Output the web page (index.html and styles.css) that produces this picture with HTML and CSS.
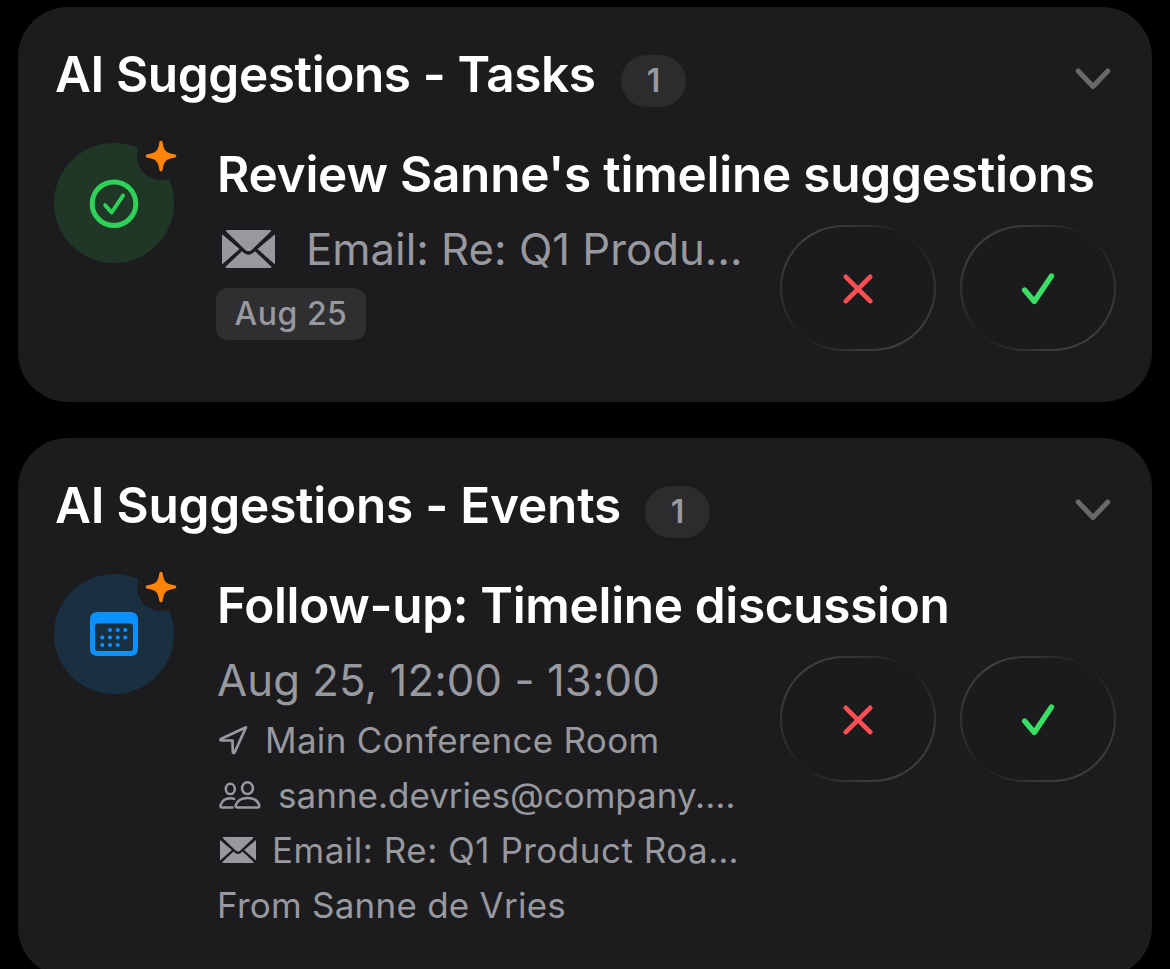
FILE: index.html
```html
<!DOCTYPE html>
<html lang="en">
<head>
<meta charset="utf-8">
<title>AI Suggestions</title>
<link rel="stylesheet" href="styles.css">
</head>
<body>
<svg class="defs" width="0" height="0" aria-hidden="true">
  <symbol id="chevron" viewBox="0 0 36 22"><path d="M3.200 3 18 18.500 32.800 3" fill="none" stroke="currentColor" stroke-width="5" stroke-linecap="round" stroke-linejoin="round"/></symbol>
  <symbol id="sparkle" viewBox="0 0 32 32"><path d="M16 .7c1 0 1.500.7 1.700 1.800C19 11 21 13 29.500 14.300c1.100.2 1.800.8 1.800 1.700s-.7 1.500-1.800 1.700C21 19 19 21 17.700 29.500c-.2 1.100-.7 1.800-1.700 1.800s-1.500-.7-1.700-1.800C13 21 11 19 2.500 17.700 1.400 17.500.7 16.900.7 16s.7-1.500 1.800-1.700C11 13 13 11 14.300 2.500 14.500 1.400 15 .7 16 .7z" fill="currentColor"/></symbol>
  <symbol id="envelope" viewBox="0 0 53 38">
    <path d="M3.500.8Q4.500 0 6 0H47Q48.500 0 49.500.8L30 19.700Q26.500 23 23 19.700ZM0 4.200 17.500 19 0 34.500ZM53 4.200V34.500L35.500 19ZM3 37.200 20 21.200 22 23Q26.500 26.500 31 23L33 21.200 50 37.200Q49 38 47 38H6Q4 38 3 37.200Z" fill="currentColor"/>
  </symbol>
  <symbol id="cross" viewBox="0 0 30 30"><path d="M2.800 2.800 27.200 27.200M27.200 2.800 2.800 27.200" fill="none" stroke="currentColor" stroke-width="4.600" stroke-linecap="round"/></symbol>
  <symbol id="check" viewBox="0 0 34 32"><path d="M3.600 17 13.300 28.500 30.500 3" fill="none" stroke="currentColor" stroke-width="5.400" stroke-linecap="round" stroke-linejoin="round"/></symbol>
</svg>

<main class="list">
  <section class="card card-tasks">
    <header class="card-header">
      <h2 class="heading heading-tasks">AI Suggestions - Tasks</h2>
      <span class="count">1</span>
      <svg class="chevron"><use href="#chevron"/></svg>
    </header>
    <div class="item">
      <div class="avatar avatar-task">
        <svg class="avatar-icon" viewBox="0 0 50 50" fill="none" stroke="currentColor" stroke-linecap="round" stroke-linejoin="round"><circle cx="25" cy="25.700" r="21.800" stroke-width="5"/><path d="M16.200 27.200 22.600 34.500 34 17.700" stroke-width="4"/></svg>
        <span class="badge"><svg><use href="#sparkle"/></svg></span>
      </div>
      <div class="content">
        <h3 class="title title-task">Review Sanne's timeline suggestions</h3>
        <div class="body">
          <div class="details">
            <p class="source"><svg class="envelope-large"><use href="#envelope"/></svg><span>Email: Re: Q1 Produ…</span></p>
            <span class="due">Aug 25</span>
          </div>
          <div class="actions">
            <button class="action reject" aria-label="Reject"><svg class="cross"><use href="#cross"/></svg></button>
            <button class="action accept" aria-label="Accept"><svg class="check"><use href="#check"/></svg></button>
          </div>
        </div>
      </div>
    </div>
  </section>

  <section class="card card-events">
    <header class="card-header">
      <h2 class="heading heading-events">AI Suggestions - Events</h2>
      <span class="count">1</span>
      <svg class="chevron"><use href="#chevron"/></svg>
    </header>
    <div class="item">
      <div class="avatar avatar-event">
        <svg class="avatar-icon" viewBox="0 0 50 50" fill="currentColor"><path fill-rule="evenodd" d="M8.500 3H41.500Q49 3 49 10.500V39.500Q49 47 41.500 47H8.500Q1 47 1 39.500V10.500Q1 3 8.500 3ZM9 14.500Q6 14.500 6 17.500V39Q6 42 9 42H41Q44 42 44 39V17.500Q44 14.500 41 14.500Z"/><g><circle cx="21" cy="21" r="2.100"/><circle cx="28.700" cy="21" r="2.100"/><circle cx="36.300" cy="21" r="2.100"/><circle cx="13.300" cy="28.500" r="2.100"/><circle cx="21" cy="28.500" r="2.100"/><circle cx="28.700" cy="28.500" r="2.100"/><circle cx="36.300" cy="28.500" r="2.100"/><circle cx="13.300" cy="36" r="2.100"/><circle cx="21" cy="36" r="2.100"/><circle cx="28.700" cy="36" r="2.100"/></g></svg>
        <span class="badge"><svg><use href="#sparkle"/></svg></span>
      </div>
      <div class="content">
        <h3 class="title title-event">Follow-up: Timeline discussion</h3>
        <div class="body">
          <div class="details">
            <p class="when">Aug 25, 12:00 - 13:00</p>
            <ul class="meta">
              <li class="place"><svg viewBox="0 0 30 30" width="30" height="30" fill="none" stroke="currentColor" stroke-width="2.700" stroke-linejoin="round"><path d="M2.800 14 28 2.300 16.500 27.700Q15.200 28.600 14.800 27L14.500 15.500 3.400 15.300Q1.500 15 2.800 14Z"/></svg><span>Main Conference Room</span></li>
              <li class="people"><svg viewBox="0 0 42 28" width="42" height="28" fill="none" stroke="currentColor" stroke-width="2.500" stroke-linecap="round" stroke-linejoin="round"><ellipse cx="11.300" cy="7.900" rx="4.500" ry="5.200"/><ellipse cx="28.500" cy="7.200" rx="5.400" ry="5.900"/><path d="M13.500 26.500H3.200Q1 26.500 1.500 24.300C3 19.500 7 17.200 11.300 17.200Q13.500 17.200 15.200 17.900M18.800 26.500H38.200Q40.800 26.500 40.200 24C38.500 19.300 33.500 17 28.500 17S18.500 19.300 16.800 24Q16.200 26.500 18.800 26.500Z"/></svg><span>sanne.devries@company.…</span></li>
              <li class="mail"><svg class="envelope-small"><use href="#envelope"/></svg><span>Email: Re: Q1 Product Roa…</span></li>
              <li class="sender"><span>From Sanne de Vries</span></li>
            </ul>
          </div>
          <div class="actions">
            <button class="action reject" aria-label="Reject"><svg class="cross"><use href="#cross"/></svg></button>
            <button class="action accept" aria-label="Accept"><svg class="check"><use href="#check"/></svg></button>
          </div>
        </div>
      </div>
    </div>
  </section>
</main>
</body>
</html>
```
FILE: styles.css
```css
* { box-sizing: border-box; margin: 0; padding: 0; }
body {
  height: 969px;
  overflow: hidden;
  background: #000;
  color: #fff;
  font-family: Inter, "Liberation Sans", sans-serif;
  white-space: nowrap;
}
svg { display: block; flex: none; }
.defs { position: absolute; }
.list { display: flex; flex-direction: column; gap: 36px; padding: 7px 18px 0; }
.card { padding: 37px 36px 0; border-radius: 50px; background: #1c1c1e; }
.card-tasks { height: 395px; }
.card-events { height: 539px; }

.card-header { display: flex; align-items: flex-start; height: 99px; padding-left: 1px; }
.heading, .title { font-size: 49.5px; font-weight: 600; line-height: 60px; }
.heading-tasks { width: 566px; letter-spacing: -.39px; }
.heading-events { width: 590px; letter-spacing: -.22px; }
.count {
  width: 65px; height: 52px; margin-top: 11px;
  border-radius: 26px; background: #2c2c2e; color: #98989f;
  font-size: 32px; font-weight: 600; line-height: 52px; text-align: center;
}
.chevron { width: 36px; height: 22px; margin: 24px 5px 0 auto; color: #69696c; }

.item { display: flex; gap: 42px; }
.avatar { position: relative; flex: none; display: grid; place-items: center; width: 120px; height: 120px; border-radius: 50%; }
.avatar-task { background: #203627; color: #30d158; }
.avatar-event { background: #1a2f40; color: #0a91ff; }
.avatar-icon { width: 50px; height: 50px; }
.badge {
  position: absolute; top: -11px; right: -11px;
  display: grid; place-items: center;
  width: 48px; height: 48px; border-radius: 50%;
  background: #1c1c1e; color: #ff8408;
}
.badge svg { width: 32px; height: 32px; }

.content { flex: 1; min-width: 0; padding-top: 1px; }
.title { padding-left: 1px; }
.title-task { letter-spacing: -.23px; }
.title-event { letter-spacing: -.33px; }
.body { display: flex; justify-content: space-between; margin-top: 19px; }
.details { color: #98989f; }
.source { display: flex; align-items: center; gap: 31px; height: 52px; padding-left: 6px; font-size: 43.7px; }
.envelope-large { width: 53px; height: 38px; }
.due {
  display: block; width: 150px; height: 52px; margin-top: 13px;
  border-radius: 12px; background: #2f2f31;
  font-size: 32px; font-weight: 500; line-height: 52px; text-align: center; letter-spacing: .5px;
}
.when { padding: 1px 0 0 1px; font-size: 43.7px; line-height: 52px; letter-spacing: .08px; }
.meta { margin-top: 5px; padding-left: 1px; list-style: none; font-size: 35px; }
.meta li { display: flex; align-items: center; height: 55px; }
.place { gap: 17px; padding-left: 1px; letter-spacing: .3px; }
.people { gap: 17px; padding-left: 2px; }
.mail { gap: 16px; padding-left: 3px; letter-spacing: .5px; }
.sender { letter-spacing: .25px; }
.envelope-small { width: 36px; height: 26px; }

.actions { display: flex; gap: 24px; margin-top: 2px; }
.action {
  display: grid; place-items: center;
  width: 156px; height: 126px; padding-top: 1px;
  border: 2.5px solid transparent; border-radius: 63px;
  background:
    linear-gradient(#1b1b1d, #1b1b1d) padding-box,
    conic-gradient(#343436 0deg, #1d1d1f 42deg, #242426 60deg, #38383a 100deg, #404042 135deg, #38383a 180deg, #1d1d1f 232deg, #2b2b2d 250deg, #3c3c3e 290deg, #404042 315deg, #343436 360deg) border-box;
}
.reject { color: #ff4f50; }
.accept { color: #3ade64; }
.cross { width: 30px; height: 30px; }
.check { width: 34px; height: 32px; }
```
